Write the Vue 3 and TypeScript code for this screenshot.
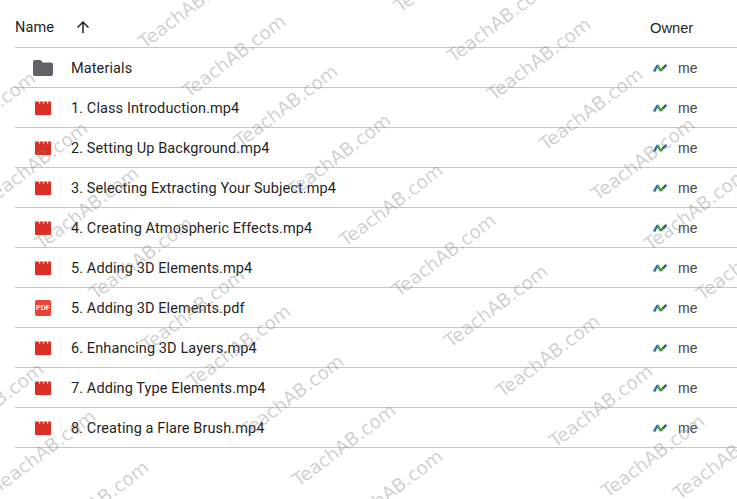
<template>
  <div class="page">
    <div class="file-list">
      <div class="head-row">
        <div class="head-name">
          <span>Name</span>
          <svg class="sort-icon" viewBox="0 0 24 24" width="18" height="18">
            <path d="M4 12l1.41 1.41L11 7.83V20h2V7.83l5.58 5.59L20 12l-8-8-8 8z" fill="#1f1f1f" />
          </svg>
        </div>
        <div class="head-owner">Owner</div>
      </div>

      <div v-for="file in files" :key="file.name" class="file-row">
        <div class="file-icon">
          <svg v-if="file.type === 'folder'" viewBox="0 0 20 16" width="20" height="16">
            <path d="M2 0H7.500L10 2.500H18a2 2 0 0 1 2 2V14a2 2 0 0 1-2 2H2a2 2 0 0 1-2-2V2a2 2 0 0 1 2-2z" fill="#5f6368" />
          </svg>
          <svg v-else-if="file.type === 'video'" viewBox="0 0 16 14" width="16" height="14">
            <path d="M1 .5H3.600L4.600 3H5.400L4.400 .5H7.600L8.600 3H9.400L8.400 .5H11.600L12.600 3H13.400L12.400 .5H15a1 1 0 0 1 1 1V13a1 1 0 0 1-1 1H1a1 1 0 0 1-1-1V1.500a1 1 0 0 1 1-1z" fill="#d93025" />
          </svg>
          <div v-else class="pdf-icon">PDF</div>
        </div>
        <div class="file-name">{{ file.name }}</div>
        <div class="file-owner">
          <svg class="avatar" viewBox="0 0 20 20" width="20" height="20">
            <circle cx="10" cy="10" r="9.700" fill="#fff" stroke="#f4f4f4" stroke-width="0.600" />
            <path d="M4 13.500L7.700 7.200" fill="none" stroke="#1a6fb5" stroke-width="2.400" />
            <path d="M7.300 7L10.800 13" fill="none" stroke="#4c9a2a" stroke-width="2.400" />
            <path d="M10.400 13L13.200 10" fill="none" stroke="#4c9a2a" stroke-width="2.400" />
            <path d="M12.900 10.300L16.400 6.800" fill="none" stroke="#17609f" stroke-width="2.400" />
          </svg>
          <span>me</span>
        </div>
      </div>
    </div>

    <div class="watermarks">
      <span
        v-for="(mark, i) in marks"
        :key="i"
        class="watermark"
        :style="{ left: mark[0] + 'px', top: mark[1] + 'px' }"
      >TeachAB.com</span>
    </div>
  </div>
</template>

<script setup lang="ts">
type FileType = 'folder' | 'video' | 'pdf';

const files: { name: string; type: FileType }[] = [
  { name: 'Materials', type: 'folder' },
  { name: '1. Class Introduction.mp4', type: 'video' },
  { name: '2. Setting Up Background.mp4', type: 'video' },
  { name: '3. Selecting Extracting Your Subject.mp4', type: 'video' },
  { name: '4. Creating Atmospheric Effects.mp4', type: 'video' },
  { name: '5. Adding 3D Elements.mp4', type: 'video' },
  { name: '5. Adding 3D Elements.pdf', type: 'pdf' },
  { name: '6. Enhancing 3D Layers.mp4', type: 'video' },
  { name: '7. Adding Type Elements.mp4', type: 'video' },
  { name: '8. Creating a Flare Brush.mp4', type: 'video' },
];

// watermark centres, read off the screenshot
const marks: [number, number][] = [
  [190, 7], [234, 56], [286, 106], [339, 155], [391, 205], [444, 255], [496, 306], [548, 356], [601, 406], [653, 456],
  [446, -29], [499, 21], [539, 59], [591, 109], [643, 159], [696, 209], [748, 259],
  [36, 163], [87, 208], [141, 258], [193, 310], [239, 346], [292, 396], [344, 445], [391, 491], [439, 542],
  [-16, 113], [-8, 404], [44, 451], [97, 502], [725, 458],
];
</script>

<style scoped>
.page {
  position: relative;
  width: 737px;
  height: 499px;
  overflow: hidden;
  background: #fff;
  font-family: Roboto, "Liberation Sans", sans-serif;
  color: #1f1f1f;
}
.file-list {
  padding-left: 15px;
}
.head-row,
.file-row {
  display: grid;
  align-items: center;
  border-bottom: 1px solid #c4c7c5;
  box-sizing: border-box;
}
.head-row {
  grid-template-columns: 635px 1fr;
  height: 48px;
  font-size: 14.500px;
  letter-spacing: 0.1px;
  padding-top: 8px;
}
.head-name {
  display: flex;
  align-items: center;
  gap: 20px;
}
.head-owner {
  font-family: "Liberation Sans", sans-serif;
  font-size: 14.700px;
  letter-spacing: 0;
}
.sort-icon {
  margin-top: -2px;
}
.file-row {
  height: 40px;
  grid-template-columns: 56px 579px 1fr;
  font-size: 14.500px;
  letter-spacing: 0.1px;
}
.file-icon {
  display: flex;
  justify-content: center;
  width: 56px;
}
.pdf-icon {
  width: 16px;
  height: 16px;
  border-radius: 2px;
  background: #ea4335;
  color: #fff;
  font-size: 7px;
  font-weight: 700;
  line-height: 16px;
  letter-spacing: 0;
  text-align: center;
  font-family: "Liberation Sans", sans-serif;
}
.file-name {
  padding-top: 1px;
  white-space: nowrap;
}
.file-owner {
  display: flex;
  align-items: center;
  gap: 8px;
  color: #444746;
  font-family: "Liberation Sans", sans-serif;
  font-size: 14px;
  letter-spacing: 0;
}
.watermarks {
  position: absolute;
  inset: 0;
  pointer-events: none;
}
.watermark {
  position: absolute;
  transform: translate(-50%, -50%) rotate(-37deg);
  font-family: "DejaVu Sans", sans-serif;
  font-size: 18.500px;
  color: rgba(130, 130, 130, 0.38);
  white-space: nowrap;
}
</style>
